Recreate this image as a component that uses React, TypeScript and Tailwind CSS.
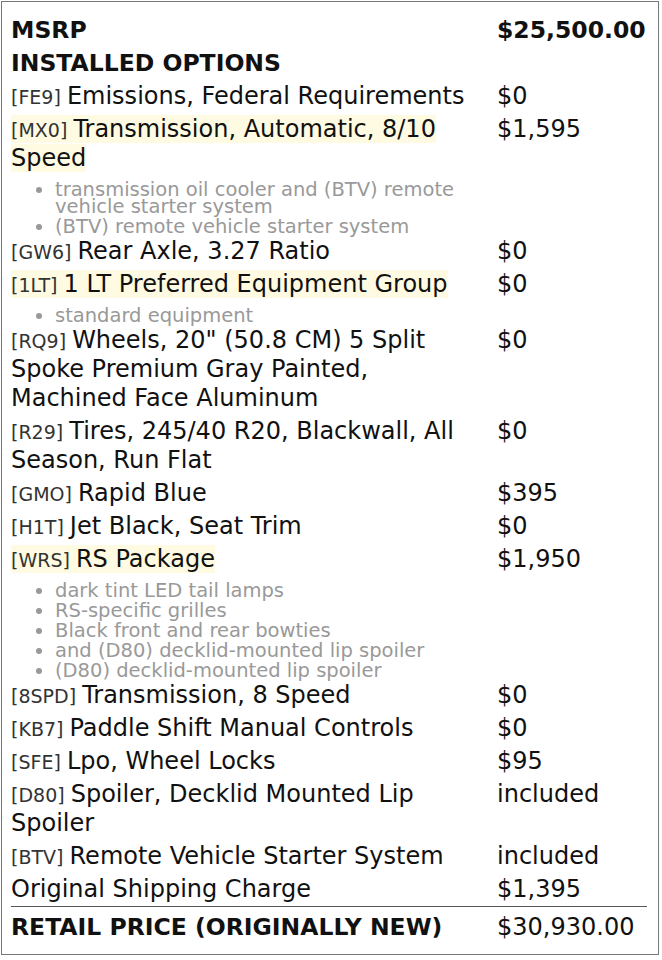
import React from 'react';

interface Option {
  code?: string;
  name: string;
  price: string;
  highlight?: boolean;
  notes?: string[];
}

const options: Option[] = [
  { code: 'FE9', name: 'Emissions, Federal Requirements', price: '$0' },
  {
    code: 'MX0',
    name: 'Transmission, Automatic, 8/10 Speed',
    price: '$1,595',
    highlight: true,
    notes: ['transmission oil cooler and (BTV) remote vehicle starter system', '(BTV) remote vehicle starter system'],
  },
  { code: 'GW6', name: 'Rear Axle, 3.27 Ratio', price: '$0' },
  {
    code: '1LT',
    name: '1 LT Preferred Equipment Group',
    price: '$0',
    highlight: true,
    notes: ['standard equipment'],
  },
  { code: 'RQ9', name: 'Wheels, 20" (50.8 CM) 5 Split Spoke Premium Gray Painted, Machined Face Aluminum', price: '$0' },
  { code: 'R29', name: 'Tires, 245/40 R20, Blackwall, All Season, Run Flat', price: '$0' },
  { code: 'GMO', name: 'Rapid Blue', price: '$395' },
  { code: 'H1T', name: 'Jet Black, Seat Trim', price: '$0' },
  {
    code: 'WRS',
    name: 'RS Package',
    price: '$1,950',
    highlight: true,
    notes: [
      'dark tint LED tail lamps',
      'RS-specific grilles',
      'Black front and rear bowties',
      'and (D80) decklid-mounted lip spoiler',
      '(D80) decklid-mounted lip spoiler',
    ],
  },
  { code: '8SPD', name: 'Transmission, 8 Speed', price: '$0' },
  { code: 'KB7', name: 'Paddle Shift Manual Controls', price: '$0' },
  { code: 'SFE', name: 'Lpo, Wheel Locks', price: '$95' },
  { code: 'D80', name: 'Spoiler, Decklid Mounted Lip Spoiler', price: 'included' },
  { code: 'BTV', name: 'Remote Vehicle Starter System', price: 'included' },
  { name: 'Original Shipping Charge', price: '$1,395' },
];

function OptionRow({ item }: { item: Option }) {
  const label = (
    <>
      {item.code && <span className="text-[19px] leading-none text-[#333]">[{item.code}] </span>}
      {item.name}
    </>
  );
  return (
    <>
      <div className="grid grid-cols-[486px_1fr] py-[2px] leading-[29px]">
        <div className="pr-[8px]">
          {item.highlight ? <span className="bg-[#fefbe2]">{label}</span> : label}
        </div>
        <div>{item.price}</div>
      </div>
      {item.notes && (
        <ul className="list-disc pl-[44px] pt-[6px] pb-[0px] flex flex-col gap-[3px] text-[19.5px] leading-[17px] text-[#999] pr-[190px]">
          {item.notes.map((n, i) => (
            <li key={i}>{n}</li>
          ))}
        </ul>
      )}
    </>
  );
}

export default function App() {
  return (
    <div className="p-[1px] bg-white">
      <div
        className="w-[658px] border border-[#777] pl-[9px] pr-[11px] pt-[12px] pb-[10px] text-[24px] text-[#111]"
        style={{ fontFamily: '"DejaVu Sans", Verdana, sans-serif' }}
      >
        <div className="grid grid-cols-[486px_1fr] py-[2px] leading-[29px] font-bold text-[23.5px]">
          <div>MSRP</div>
          <div>$25,500.00</div>
        </div>
        <div className="py-[2px] leading-[29px] font-bold text-[23.5px]">INSTALLED OPTIONS</div>
        {options.map((o, i) => (
          <OptionRow key={i} item={o} />
        ))}
        <div className="grid grid-cols-[486px_1fr] border-t border-[#555] pt-[6px] pb-[2px] leading-[29px]">
          <div className="font-bold text-[23.5px]">RETAIL PRICE (ORIGINALLY NEW)</div>
          <div>$30,930.00</div>
        </div>
      </div>
    </div>
  );
}
